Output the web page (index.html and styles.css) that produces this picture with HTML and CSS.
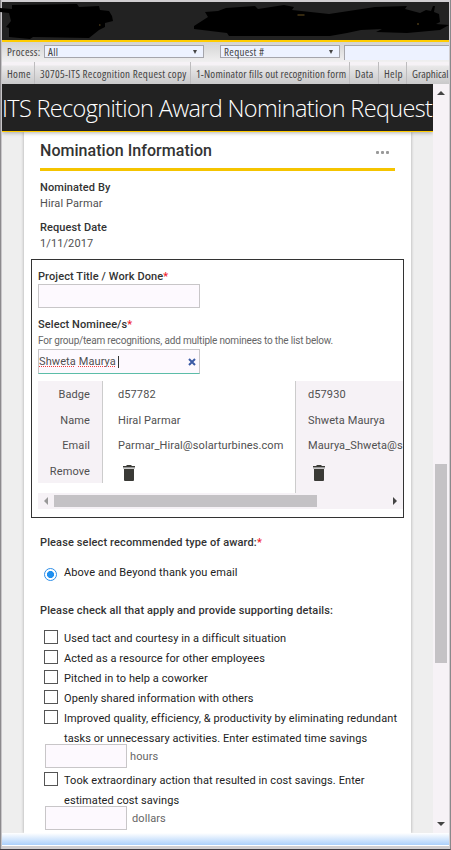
FILE: index.html
```html
<!DOCTYPE html>
<html lang="en">
<head>
<meta charset="utf-8">
<title>ITS Recognition Award Nomination Request</title>
<link rel="stylesheet" href="styles.css">
</head>
<body>
<div class="window">
  <header class="banner">
    <svg class="scribble" viewBox="0 0 449 38" width="449" height="38">
      <path d="M-2 6 10 7 10 3 75 2 77 5 97 4 98 8 107 9 110 14 111 19 103 21 103 25 97 28 87 36 31 35 28 37 7 35 7 26 4 25 9 19 7 11 -2 10Z"/>
      <path d="M203 10 216 9 224 6 253 4 256 7 282 3 292 5 290 8 327 12 373 5 405 4 403 7 418 11 424 8 429 9 431 4 433 4 432 10 437 12 438 20 434 22 447 23 438 28 405 31 374 30 380 27 359 28 345 31 328 34 227 34 225 31 192 27 192 24 206 15Z"/>
      <path class="spark" d="M295.500 13h7M97 23h1.500M415 22h2"/>
    </svg>
  </header>
  <div class="search">
    <span class="process">Process:</span>
    <div class="select all"><span>All</span><i class="caret"></i></div>
    <div class="select request"><span>Request #</span><i class="caret"></i></div>
    <div class="query"></div>
  </div>
  <nav class="tabs">
    <span class="t1">Home</span><span class="t2">30705-ITS Recognition Request copy</span><span class="t3">1-Nominator fills out recognition form</span><span class="t4">Data</span><span class="t5">Help</span><span class="t6">Graphical</span>
  </nav>
  <div class="main">
    <div class="page">
      <h1>ITS Recognition Award Nomination Request</h1>
      <div class="content">
      <section class="card">
        <div class="heading"><h2>Nomination Information</h2><span class="dots"><i></i><i></i><i></i></span></div>
        <div class="field"><b>Nominated By</b><span>Hiral Parmar</span></div>
        <div class="field"><b>Request Date</b><span>1/11/2017</span></div>
        <div class="box">
          <div class="label wide">Project Title / Work Done<em>*</em></div>
          <div class="input title"></div>
          <div class="label">Select Nominee/s<em>*</em></div>
          <div class="help">For group/team recognitions, add multiple nominees to the list below.</div>
          <div class="input nominee"><span class="typed"><u>Shweta</u> <u>Maurya</u></span><i class="cursor"></i>
            <svg width="8" height="8" viewBox="0 0 8 8"><path d="M1 1 7 7M7 1 1 7"/></svg></div>
          <div class="table">
            <div class="col names"><span>Badge</span><span>Name</span><span>Email</span><span>Remove</span></div>
            <div class="col first"><span>d57782</span><span>Hiral Parmar</span><span>Parmar_Hiral@solarturbines.com</span>
              <svg class="trash" width="14" height="17" viewBox="0 0 14 17"><path class="lid" d="M1 2H13V3.500H1Z"/><path d="M5 0H9L10 1H13V2H1V1H4Z"/><path d="M2 4H12V15Q12 16 11 16H3Q2 16 2 15Z"/></svg></div>
            <div class="col second"><span>d57930</span><span>Shweta Maurya</span><span>Maurya_Shweta@s</span>
              <svg class="trash" width="14" height="17" viewBox="0 0 14 17"><path class="lid" d="M1 2H13V3.500H1Z"/><path d="M5 0H9L10 1H13V2H1V1H4Z"/><path d="M2 4H12V15Q12 16 11 16H3Q2 16 2 15Z"/></svg></div>
          </div>
          <div class="hscroll"><i class="left"></i><i class="thumb"></i><i class="right"></i></div>
        </div>
        <div class="question">Please select recommended type of award:<em>*</em></div>
        <div class="radio"><i></i><span>Above and Beyond thank you email</span></div>
        <div class="question">Please check all that apply and provide supporting details:</div>
        <div class="checks">
          <div class="check"><i></i><span>Used tact and courtesy in a difficult situation</span></div>
          <div class="check"><i></i><span>Acted as a resource for other employees</span></div>
          <div class="check"><i></i><span>Pitched in to help a coworker</span></div>
          <div class="check"><i></i><span>Openly shared information with others</span></div>
          <div class="check"><i></i><span>Improved quality, efficiency, &amp; productivity by eliminating redundant<br>tasks or unnecessary activities. Enter estimated time savings</span></div>
          <div class="amount"><i></i><span>hours</span></div>
          <div class="check"><i></i><span>Took extraordinary action that resulted in cost savings. Enter<br>estimated cost savings</span></div>
          <div class="amount dollars"><i></i><span>dollars</span></div>
        </div>
      </section>
      </div>
    </div>
    <div class="vscroll"><i class="up"></i><i class="thumb"></i><i class="down"></i></div>
  </div>
  <footer class="status"></footer>
</div>
</body>
</html>
```
FILE: styles.css
```css
* { box-sizing: border-box; }
body { margin: 0; background: #f6f2f6; overflow: hidden; }
i, em { font-style: normal; }
.window {
  width: 451px; height: 850px; padding: 2px 1px 0 2px; overflow: hidden;
  border-right: 1px solid #8a888b; border-bottom: 1px solid #3e3a40;
  background: linear-gradient(90deg, #8c8a8d 0 1px, #c8c6c9 1px 2px, transparent 2px), #d0ced1;
}
.banner { height: 40px; background: #222; border-bottom: 2px solid #fc0; }
.scribble { display: block; fill: #000; overflow: visible; }
.scribble .spark { stroke: #6b5320; stroke-width: 1; fill: none; }

.search {
  height: 20px; display: flex; align-items: flex-start; padding: 3px 0 0 5px; overflow: hidden;
  background: linear-gradient(#d3d3d3, #f1f0f1);
  font: 11px/14px "Open Sans", sans-serif; color: #444; white-space: nowrap;
}
.process { width: 37px; }
.select {
  height: 13px; display: flex; justify-content: space-between; align-items: center;
  border: 1px solid #a5a5ab; background: #edf2ff; padding: 0 6px 0 3px;
}
.all { width: 160px; }
.request { width: 120px; margin-left: 16px; }
.caret { border: 2px solid transparent; border-top: 4px solid #444; border-bottom: 0; }
.query { flex: 1; margin-left: 4px; height: 15px; border: 1px solid #a5a5ab; border-right: 0; border-bottom: 0; background: #edf2ff; }
.search span, .tabs { font-size: 11px; font-stretch: 86%; letter-spacing: .3px; }

.tabs {
  height: 22px; display: flex; overflow: hidden;
  background: linear-gradient(#f6f2f6 0 3px, #e9e8e9 4px, #c9c9ca);
  font-family: "Open Sans", sans-serif; line-height: 23px; color: #444; white-space: nowrap;
}
.tabs span { border-right: 1px solid #bdbcbe; padding-left: 5px; flex: none; }
.tabs .t1 { width: 33px; }
.tabs .t2 { width: 156px; }
.tabs .t3 { width: 159px; letter-spacing: .17px; }
.tabs .t4 { width: 29px; }
.tabs .t5 { width: 28px; }
.tabs .t6 { width: 43px; border: 0; letter-spacing: 0; }

.main { height: 749px; display: flex; background: #eee; }
.page { width: 431px; height: 749px; overflow: hidden; }
h1 {
  position: relative; z-index: 1; margin: 0; height: 48px; background: #222; color: #fff; border-bottom: 1px solid #fc0;
  font: 300 23.500px/49px "Open Sans", sans-serif; letter-spacing: -.66px; white-space: nowrap;
  box-shadow: 0 1px 4px rgba(0,0,0,.3);
}
.content { padding: 0 22px; }
.card {
  width: 387px; height: 701px; background: #fff; box-shadow: 0 0 3px rgba(0,0,0,.3);
  font: 11px/16px Roboto, sans-serif; letter-spacing: .1px; color: #505050;
}
.heading { height: 39px; margin: 0 16px; border-bottom: 3px solid #f5c400; display: flex; justify-content: space-between; align-items: center; }
h2 { margin: 0; padding-top: 2px; font: 500 16px/36px Roboto, sans-serif; letter-spacing: .04px; color: #333; }
.dots { display: flex; gap: 2px; padding: 5px 6px 0 0; }
.dots i { width: 3px; height: 3px; border-radius: 1px; background: #999; }
.field { display: flex; flex-direction: column; margin: 9px 16px 0; height: 31px; }
.field b { font-weight: 500; color: #333; }
.heading + .field { margin-top: 9px; height: 32px; }
.field + .field { margin-top: 8px; }

.box { width: 373px; height: 259px; margin: 8px 0 0 7px; border: 1px solid #333; padding: 8px 0 0 6px; overflow: hidden; }
.label { height: 16px; font-weight: 500; color: #333; }
.wide { line-height: 18px; }
em { color: #f01c2c; }
.input { width: 162px; height: 24px; border: 1px solid #c8c6c8; background: #fdf9fe; }
.title { margin-bottom: 9px; }
.help { font-size: 10px; letter-spacing: -.184px; height: 16px; color: #666; }
.nominee { height: 25px; display: flex; align-items: center; border-bottom-color: #5cbda8; }
.nominee u { text-decoration: underline dotted #f04040 1px; text-underline-offset: 1px; }
.cursor { width: 1px; height: 12px; margin-left: 2px; background: #333; }
.nominee svg { margin: 0 3px 0 auto; fill: none; stroke: #3b5ba5; stroke-width: 2; }
.table { display: flex; height: 112px; margin-top: 7px; width: 365px; overflow: hidden; line-height: 27px; }
.col { display: flex; flex-direction: column; flex: none; }
.col span { height: 25.700px; white-space: nowrap; }
.names { width: 65px; height: 102px; background: #f6f2f6; border-right: 1px solid #ccc; text-align: right; padding-right: 12px; }
.first { width: 192px; padding-left: 15px; }
.second { width: 120px; padding-left: 12px; background: #f6f2f6; border-left: 1px solid #ccc; }
.trash { margin: 7px 0 0 4px; fill: #3a3a36; }
.trash .lid { fill: #999; }
.hscroll { height: 16px; width: 365px; display: flex; align-items: center; background: #f6f2f6; }
.hscroll .left { margin-left: 6px; border: 4px solid transparent; border-right-color: #999; border-left: 0; }
.hscroll .thumb { margin-left: 6px; width: 263px; height: 12px; background: #c4c2c5; }
.hscroll .right { margin-left: auto; margin-right: 6px; border: 4px solid transparent; border-left-color: #444; border-right: 0; }

.question { margin: 17px 16px 0; font-weight: 500; color: #333; letter-spacing: .127px; }
.radio { display: flex; height: 14px; margin: 16px 0 0 20px; color: #222; line-height: 12px; }
.radio i { width: 13px; height: 13px; margin-top: 1px; border: 1px solid #2e8ee8; border-radius: 50%; background: radial-gradient(#2090f0 0 3.300px, #fff 3.800px); }
.radio span { margin-left: 7px; }
.radio + .question { margin-top: 22px; }
.checks { margin: 9px 0 0 20px; letter-spacing: .085px; }
.check { display: flex; height: 20px; color: #222; line-height: 20px; white-space: nowrap; }
.check:has(br) { height: 40px; }
.check i { width: 14px; height: 14px; margin: 2px 6px 0 0; border: 1px solid #555; background: #fff; }
.check span { padding-top: 1px; }
.amount { display: flex; height: 22px; padding-left: 1px; color: #666; line-height: 16px; }
.amount i { width: 82px; height: 24px; margin-top: -4px; border: 1px solid #c8c6c8; background: #fdf9fe; }
.amount span { margin-left: 3px; padding-top: 1px; }
.dollars span { margin-left: 5px; }

.vscroll { width: 16px; height: 749px; background: #f6f2f6; display: flex; flex-direction: column; align-items: center; }
.vscroll .up { margin-top: 7px; border: 4px solid transparent; border-bottom-color: #444; border-top: 0; }
.vscroll .thumb { margin-top: 369px; width: 12px; height: 199px; background: #c4c2c5; }
.vscroll .down { margin-top: auto; margin-bottom: 7px; border: 4px solid transparent; border-top-color: #444; border-bottom: 0; }
.status { height: 13px; border-bottom: 1px solid #fff; background: linear-gradient(#fff, #acd0fb); }
```
